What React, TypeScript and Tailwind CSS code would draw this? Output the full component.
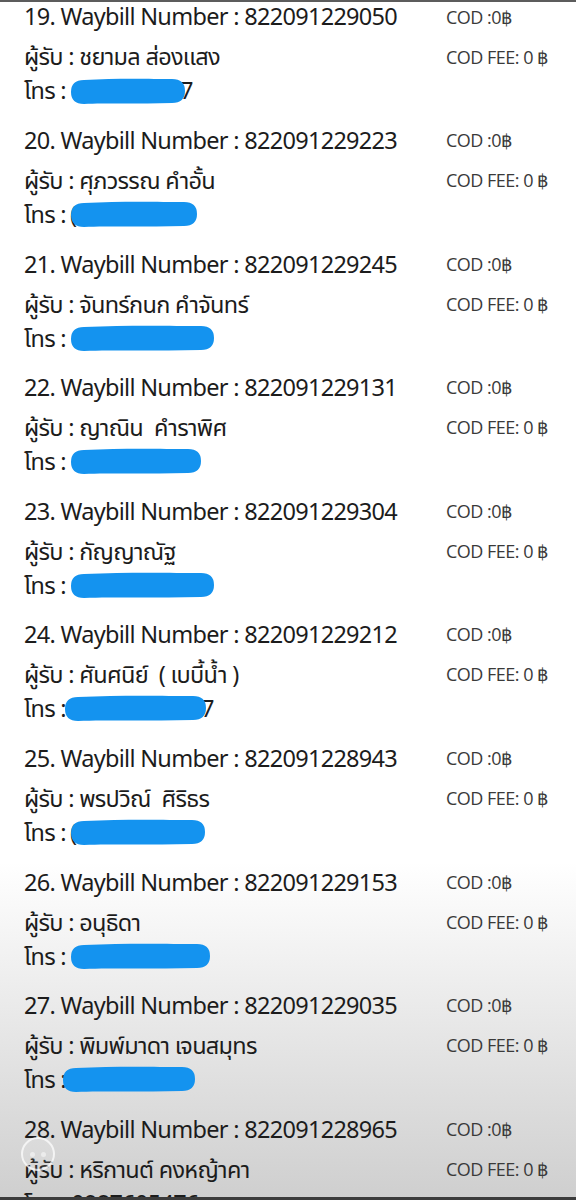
import React from "react"

type Entry = {
  no: number
  waybill: string
  name: string
  blob: { w: number; tail?: string; lead?: string; off?: number }
}

const entries: Entry[] = [
  { no: 19, waybill: "822091229050", name: "ชยามล ส่องแสง", blob: { w: 116, tail: "7" } },
  { no: 20, waybill: "822091229223", name: "ศุภวรรณ คำอั้น", blob: { w: 128, lead: "(" } },
  { no: 21, waybill: "822091229245", name: "จันทร์กนก คำจันทร์", blob: { w: 145 } },
  { no: 22, waybill: "822091229131", name: "ญาณิน  คำราพิศ", blob: { w: 132 } },
  { no: 23, waybill: "822091229304", name: "กัญญาณัฐ", blob: { w: 145 } },
  { no: 24, waybill: "822091229212", name: "ศันศนิย์  ( เบบี้น้ำ )", blob: { w: 143, tail: "7", off: -6 } },
  { no: 25, waybill: "822091228943", name: "พรปวิณ์  ศิริธร", blob: { w: 136, lead: "(" } },
  { no: 26, waybill: "822091229153", name: "อนุธิดา", blob: { w: 141 } },
  { no: 27, waybill: "822091229035", name: "พิมพ์มาดา เจนสมุทร", blob: { w: 134, off: -8 } },
]

const sideFont = { fontFamily: "'Open Sans', sans-serif" }

function Blob({ w }: { w: number }) {
  return (
    <svg width={w} height="29" viewBox={`0 0 ${w} 29`} className="block">
      <path
        d={`M14 3 C ${w * 0.4} 1, ${w * 0.7} 2, ${w - 14} 2 Q ${w - 1} 2, ${w - 1} 14 Q ${w - 1} 26, ${w - 14} 26 C ${w * 0.6} 27, ${w * 0.3} 26, 14 27 Q 1 27, 1 15 Q 1 3, 14 3 Z`}
        fill="#1493ef"
      />
    </svg>
  )
}

function Line({ left, right }: { left: string; right: string }) {
  return (
    <div className="flex h-[34px] items-center">
      <div className="w-[422px] whitespace-pre text-[23.5px] tracking-[-0.7px] text-[#1c1c1c]">{left}</div>
      <div className="text-[18px] tracking-[-0.5px] text-[#3a3a3a]" style={sideFont}>
        {right}
      </div>
    </div>
  )
}

function Row({ e }: { e: Entry }) {
  return (
    <div className="flex h-[123.6px] flex-col">
      <Line left={`${e.no}. Waybill Number : ${e.waybill}`} right="COD :0฿" />
      <div className="mt-[6px]">
        <Line left={`ผู้รับ : ${e.name}`} right="COD FEE: 0 ฿" />
      </div>
      <div className="flex h-[34px] items-center text-[23.5px] tracking-[-0.7px] text-[#1c1c1c]">
        <span>โทร :</span>
        <span className="relative ml-[4px] flex items-center">
          {e.blob.lead && <span className="absolute left-0">{e.blob.lead}</span>}
          <span className="relative" style={{ marginLeft: e.blob.off ?? 0 }}>
            <Blob w={e.blob.w} />
          </span>
          {e.blob.tail && <span className="-ml-[6px]">{e.blob.tail}</span>}
        </span>
      </div>
    </div>
  )
}

export default function App() {
  return (
    <div
      className="relative h-[1200px] w-[576px] overflow-hidden border-t-[2px] border-b-[3px] border-t-[#5c5c5c] border-b-[#3c3c3c] bg-gradient-to-b from-white from-[72%] to-[#cfcfcf]"
      style={{ fontFamily: "'Noto Sans', 'Noto Sans Thai', 'Loma', sans-serif" }}
    >
      <div className="-mt-[2px] flex flex-col pl-[24px]">
        {entries.map((e) => (
          <Row key={e.no} e={e} />
        ))}
        <Line left="28. Waybill Number : 822091228965" right="COD :0฿" />
        <div className="mt-[6px]">
          <Line left="ผู้รับ : หริกานต์ คงหญ้าคา" right="COD FEE: 0 ฿" />
        </div>
        <div className="flex h-[34px] items-center text-[23.5px] tracking-[-0.7px] text-[#1c1c1c]">โทร : 0987605476</div>
      </div>

      {/* floating assistive button */}
      <div className="absolute left-[21px] top-[1135px] flex h-[34px] w-[34px] items-center justify-center gap-[6px] rounded-full border-[2px] border-white/70 bg-white/10">
        <span className="h-[5px] w-[5px] rounded-full bg-white/50" />
        <span className="h-[5px] w-[5px] rounded-full bg-white/50" />
      </div>
    </div>
  )
}
